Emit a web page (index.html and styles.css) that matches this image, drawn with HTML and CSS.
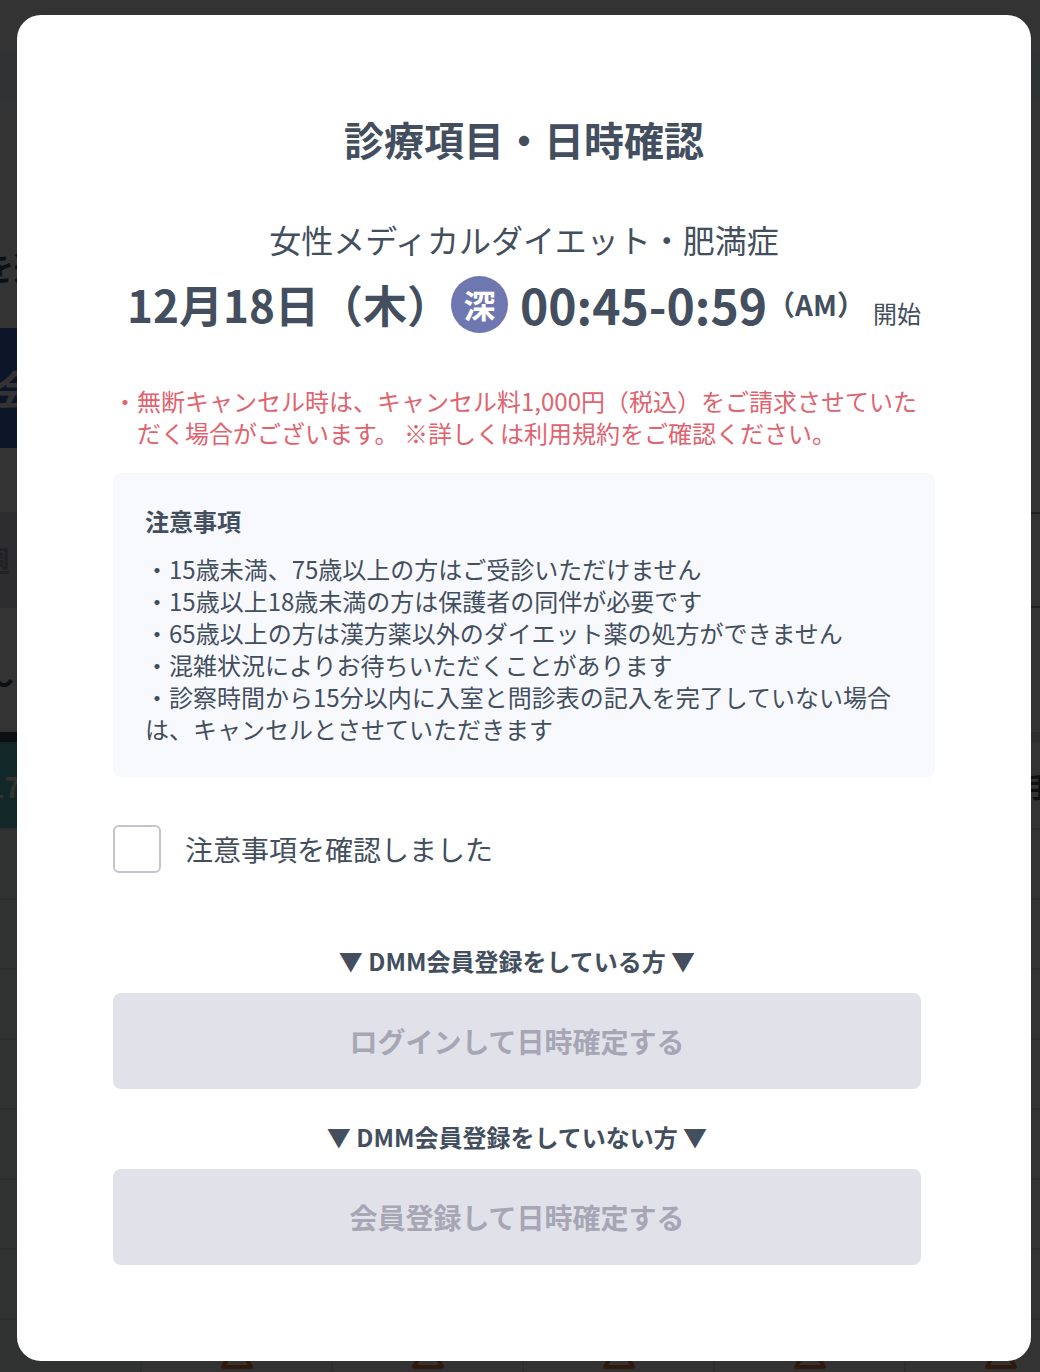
FILE: index.html
```html
<!DOCTYPE html>
<html lang="ja">
<head>
    <meta charset="UTF-8">
    <meta name="viewport" content="width=device-width, initial-scale=1.0">
    <title>診療項目・日時確認</title>
    <link rel="stylesheet" href="styles.css">
</head>
<body>
    <!-- Reservation page behind the dialog -->
    <div class="page" aria-hidden="true">
        <div class="page-nav"></div>
        <div class="page-title">を選択</div>
        <div class="page-banner">会</div>
        <div class="week-tabs">
            <div class="week-tab">週</div>
            <div class="week-tab next"></div>
        </div>
        <div class="page-range">～</div>
        <div class="day-head">
            <div class="day today">17</div>
            <div class="day last">手</div>
        </div>
        <div class="slots">
            <div class="slot-row"></div>
            <div class="slot-row"></div>
            <div class="slot-row"></div>
            <div class="slot-row"></div>
            <div class="slot-row"></div>
            <div class="slot-row"></div>
            <div class="slot-row"></div>
            <div class="slot-row">
                <div class="slot"></div>
                <div class="slot"><svg class="few" viewBox="0 0 36 32"><path d="M18 3 L32 29 H4 Z"/></svg></div>
                <div class="slot"><svg class="few" viewBox="0 0 36 32"><path d="M18 3 L32 29 H4 Z"/></svg></div>
                <div class="slot"><svg class="few" viewBox="0 0 36 32"><path d="M18 3 L32 29 H4 Z"/></svg></div>
                <div class="slot"><svg class="few" viewBox="0 0 36 32"><path d="M18 3 L32 29 H4 Z"/></svg></div>
                <div class="slot"><svg class="few" viewBox="0 0 36 32"><path d="M18 3 L32 29 H4 Z"/></svg></div>
            </div>
        </div>
    </div>

    <div class="overlay">
        <div class="modal" role="dialog" aria-modal="true" aria-labelledby="modalTitle">
            <h1 class="modal-title" id="modalTitle">診療項目・日時確認</h1>

            <p class="subject">女性メディカルダイエット・肥満症</p>
            <div class="schedule">
                <span class="date">12月18日（木）</span>
                <span class="night">深</span>
                <span class="time">00:45-0:59</span>
                <span class="ampm">（AM）</span>
                <span class="start">開始</span>
            </div>

            <p class="warning">・無断キャンセル時は、キャンセル料1,000円（税込）をご請求させていただく場合がございます。 ※詳しくは利用規約をご確認ください。</p>

            <div class="notice">
                <h2 class="notice-title">注意事項</h2>
                <p>・15歳未満、75歳以上の方はご受診いただけません</p>
                <p>・15歳以上18歳未満の方は保護者の同伴が必要です</p>
                <p>・65歳以上の方は漢方薬以外のダイエット薬の処方ができません</p>
                <p>・混雑状況によりお待ちいただくことがあります</p>
                <p>・診察時間から15分以内に入室と問診表の記入を完了していない場合は、キャンセルとさせていただきます</p>
            </div>

            <div class="confirm">
                <input type="checkbox" class="confirm-check" id="confirmCheck">
                <label for="confirmCheck">注意事項を確認しました</label>
            </div>

            <div class="actions">
                <p class="action-label">▼ DMM会員登録をしている方 ▼</p>
                <button type="button" class="action-button" disabled>ログインして日時確定する</button>
                <p class="action-label">▼ DMM会員登録をしていない方 ▼</p>
                <button type="button" class="action-button" disabled>会員登録して日時確定する</button>
            </div>
        </div>
    </div>
</body>
</html>
```

FILE: styles.css
```css
* {
    margin: 0;
    padding: 0;
    box-sizing: border-box;
}

body {
    font-family: 'Noto Sans CJK JP', sans-serif;
    color: #434f5e;
    background: #fff;
    height: 100vh;
    overflow: hidden;
}

/* page behind the dialog */
.page {
    height: 100vh;
    overflow: hidden;
    padding-top: 54px;
}

.page-nav {
    height: 48px;
    background: #f5f7fc;
}

.page-title {
    height: 226px;
    padding-top: 140px;
    font-size: 32px;
    line-height: 48px;
    font-weight: bold;
    text-indent: -18px;
}

.page-banner {
    height: 120px;
    margin-right: 32px;
    margin-bottom: 64px;
    background: #416ec8;
    color: #fff;
    font-size: 40px;
    line-height: 120px;
    font-weight: bold;
    text-indent: -4px;
}

.week-tabs {
    display: flex;
    height: 96px;
    font-size: 28px;
    line-height: 96px;
    font-weight: bold;
}

.week-tab {
    flex: 1;
    background: #e1e1ea;
    color: #a7a6b5;
    text-indent: -18px;
}

.week-tab.next {
    background: #fff;
    border-top: 2px solid #a7a6b5;
    border-bottom: 2px solid #a7a6b5;
}

.page-range {
    height: 124px;
    font-size: 32px;
    line-height: 144px;
    font-weight: bold;
    text-indent: -18px;
}

.day-head {
    display: flex;
    justify-content: space-between;
    height: 98px;
    border-bottom: 2px solid #e1e1ea;
    font-size: 28px;
    line-height: 88px;
    font-weight: bold;
}

.day {
    width: 140px;
    border-top: 10px solid #e1e1ea;
}

.day.today {
    border-top-color: #434f5e;
    background: #5cc5c8;
    color: #fff;
    text-indent: -12px;
}

.day.last {
    margin-right: -14px;
    text-align: right;
}

.slot-row {
    display: flex;
    height: 70px;
    border-bottom: 2px solid #e1e1ea;
    background: linear-gradient(90deg, #f5faf8 142px, #fff 142px);
}

.slot {
    flex: 0 0 191px;
    border-right: 2px solid #e1e1ea;
    text-align: center;
}

.slot:first-child {
    flex-basis: 142px;
}

.few {
    width: 36px;
    margin-top: 18px;
    fill: none;
    stroke: #e87f40;
    stroke-width: 4;
    stroke-linejoin: round;
}

/* dialog */
.overlay {
    position: fixed;
    inset: 0;
    display: flex;
    align-items: flex-start;
    padding: 15px 9px 11px 17px;
    background: rgba(0, 0, 0, 0.8);
}

.modal {
    width: 100%;
    padding: 96px;
    background: #fff;
    border-radius: 24px;
}

.modal-title {
    margin-bottom: 48px;
    font-size: 40px;
    line-height: 56px;
    text-align: center;
}

.subject {
    margin-bottom: 8px;
    font-size: 32px;
    line-height: 48px;
    text-align: center;
}

.schedule {
    display: flex;
    justify-content: center;
    align-items: center;
    line-height: 66px;
    white-space: nowrap;
}

.date {
    font-size: 44px;
    font-weight: bold;
}

.night {
    width: 57px;
    height: 57px;
    margin-right: 12px;
    border-radius: 50%;
    background: #6e77b0;
    color: #fff;
    font-size: 32px;
    line-height: 57px;
    font-weight: bold;
    text-align: center;
}

.time {
    font-size: 48px;
    font-weight: bold;
}

.ampm {
    font-size: 28px;
    font-weight: bold;
}

.start {
    align-self: flex-end;
    margin-left: 8px;
    font-size: 24px;
    line-height: 48px;
}

.warning {
    margin: 48px 0 24px;
    padding-left: 24px;
    color: #e0636e;
    font-size: 24px;
    line-height: 32px;
    text-indent: -24px;
}

.notice {
    padding: 32px;
    border-radius: 8px;
    background: #f8f9fd;
    font-size: 24px;
    line-height: 32px;
}

.notice-title {
    margin-bottom: 16px;
    font-size: 24px;
    line-height: 32px;
}

.confirm {
    display: flex;
    align-items: center;
    gap: 24px;
    margin: 48px 0 72px;
    font-size: 28px;
    line-height: 48px;
}

.confirm-check {
    appearance: none;
    width: 48px;
    height: 48px;
    border: 2px solid #c4c3d0;
    border-radius: 6px;
    background: #fff;
    cursor: pointer;
}

.confirm-check:checked {
    background: #6e77b0;
}

.actions {
    padding-right: 14px;
}

.action-label {
    margin-bottom: 16px;
    font-size: 24px;
    line-height: 32px;
    font-weight: bold;
    text-align: center;
}

.action-button {
    display: block;
    width: 100%;
    height: 96px;
    border: none;
    border-radius: 8px;
    background: #e1e1ea;
    color: #a7a6b5;
    font-family: inherit;
    font-size: 28px;
    font-weight: bold;
}

.action-button + .action-label {
    margin-top: 32px;
}
```
